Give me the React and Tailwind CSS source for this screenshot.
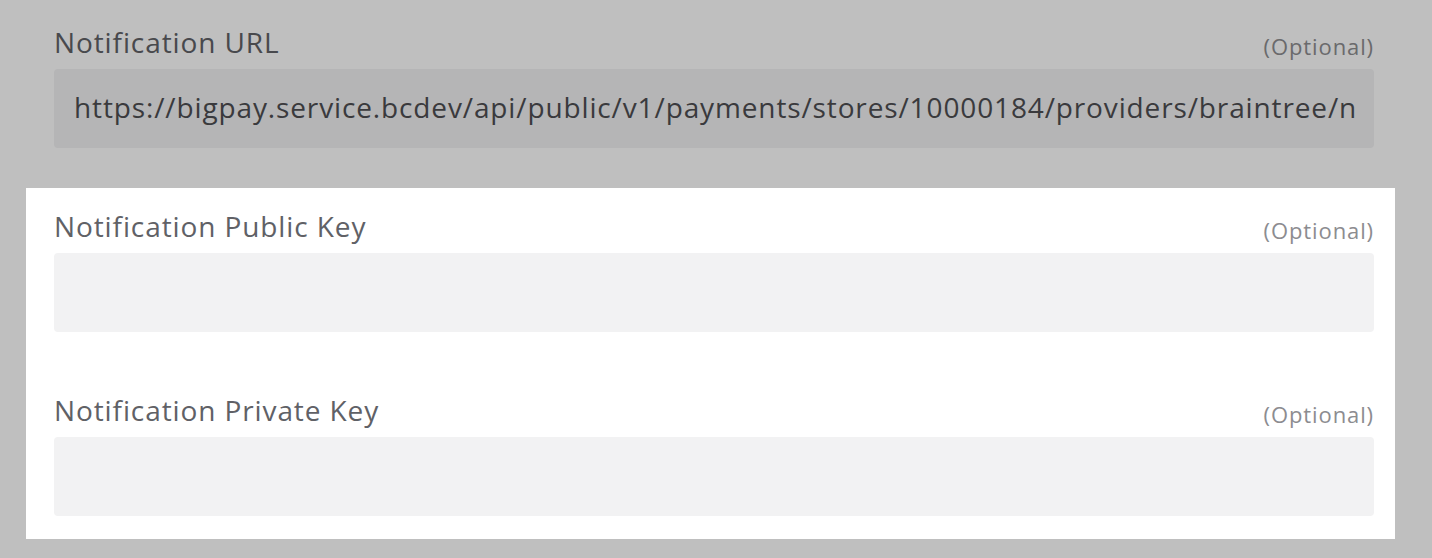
import React from 'react';

const fields = [
  {
    label: 'Notification URL',
    value: 'https://bigpay.service.bcdev/api/public/v1/payments/stores/10000184/providers/braintree/n',
  },
  { label: 'Notification Public Key', value: '' },
  { label: 'Notification Private Key', value: '' },
];

const Field = ({ label, value, dimmed = false }) => (
  <div>
    <div className="flex items-end justify-between h-[36px] mb-[9px]">
      <span className={`text-[28px] leading-[36px] tracking-[0.9px] ${dimmed ? 'text-[#48494d]' : 'text-[#606166]'}`}>
        {label}
      </span>
      <span className={`text-[22px] leading-[28px] tracking-[0.9px] ${dimmed ? 'text-[#6a6a6c]' : 'text-[#8c8c90]'}`}>
        (Optional)
      </span>
    </div>
    <div
      className={`h-[79px] rounded-[4px] pl-5 pr-4 pb-[3px] flex items-center overflow-hidden whitespace-nowrap text-[28px] tracking-[0.87px] ${
        dimmed ? 'bg-[#b5b5b6] text-[#3a3a3d]' : 'bg-[#f2f2f3] text-[#333]'
      }`}
    >
      {value}
    </div>
  </div>
);

export default function App() {
  return (
    <div
      className="w-[1432px] h-[558px] bg-[#bfbfbf] pt-[24px] pl-[54px] pr-[58px] overflow-hidden"
      style={{ fontFamily: '"Open Sans", "Noto Sans", sans-serif' }}
    >
      <Field {...fields[0]} dimmed />
      <div className="mt-[40px] -ml-[28px] -mr-[21px] pl-[28px] pr-[21px] pt-[20px] pb-[23px] bg-white">
        <Field {...fields[1]} />
        <div className="mt-[60px]">
          <Field {...fields[2]} />
        </div>
      </div>
    </div>
  );
}
